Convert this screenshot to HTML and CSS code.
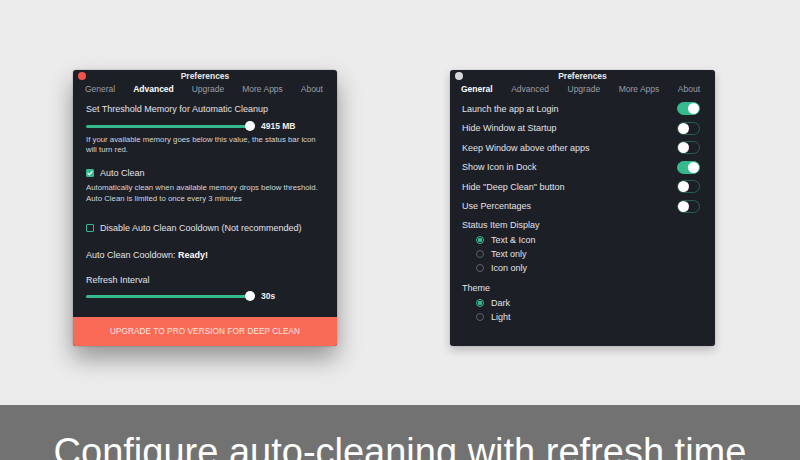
FILE: index.html
```html
<!DOCTYPE html>
<html>
<head>
<meta charset="utf-8">
<link rel="stylesheet" href="styles.css">
</head>
<body>
<div class="stage">
  <div class="window win-left">
    <div class="titlebar">
      <span class="dot dot-red"></span>
      <span class="title">Preferences</span>
      <span class="dot-spacer"></span>
    </div>
    <div class="tabs">
      <span class="tab">General</span>
      <span class="tab active">Advanced</span>
      <span class="tab">Upgrade</span>
      <span class="tab">More Apps</span>
      <span class="tab">About</span>
    </div>
    <div class="content adv">
      <div class="label l-threshold">Set Threshold Memory for Automatic Cleanup</div>
      <div class="slider-row s1">
        <div class="slider"><span class="track"></span><span class="thumb"></span></div>
        <span class="value">4915 MB</span>
      </div>
      <div class="desc d1">If your available memory goes below this value, the status bar icon<br>will turn red.</div>
      <div class="check-row c1"><span class="checkbox checked"><svg viewBox="0 0 8 8" width="8" height="8"><path d="M1.6 4.1 L3.3 5.7 L6.4 2.3" fill="none" stroke="#fff" stroke-width="1.2"/></svg></span><span>Auto Clean</span></div>
      <div class="desc d2">Automatically clean when available memory drops below threshold.<br>Auto Clean is limited to once every 3 minutes</div>
      <div class="check-row c2"><span class="checkbox"></span><span>Disable Auto Clean Cooldown (Not recommended)</span></div>
      <div class="label l-cooldown">Auto Clean Cooldown: <b>Ready!</b></div>
      <div class="label l-refresh">Refresh Interval</div>
      <div class="slider-row s2">
        <div class="slider"><span class="track"></span><span class="thumb"></span></div>
        <span class="value">30s</span>
      </div>
    </div>
    <div class="upgrade">UPGRADE TO PRO VERSION FOR DEEP CLEAN</div>
  </div>

  <div class="window win-right">
    <div class="titlebar">
      <span class="dot dot-gray"></span>
      <span class="title">Preferences</span>
      <span class="dot-spacer"></span>
    </div>
    <div class="tabs tabs-r">
      <span class="tab active">General</span>
      <span class="tab">Advanced</span>
      <span class="tab">Upgrade</span>
      <span class="tab">More Apps</span>
      <span class="tab">About</span>
    </div>
    <div class="content gen">
      <div class="toggles">
        <div class="row"><span>Launch the app at Login</span><span class="toggle on"></span></div>
        <div class="row"><span>Hide Window at Startup</span><span class="toggle"></span></div>
        <div class="row"><span>Keep Window above other apps</span><span class="toggle"></span></div>
        <div class="row"><span>Show Icon in Dock</span><span class="toggle on"></span></div>
        <div class="row"><span>Hide "Deep Clean" button</span><span class="toggle"></span></div>
        <div class="row"><span>Use Percentages</span><span class="toggle"></span></div>
      </div>
      <div class="label g-status">Status Item Display</div>
      <div class="radios r1">
        <div class="radio-row"><span class="radio sel"></span><span>Text &amp; Icon</span></div>
        <div class="radio-row"><span class="radio"></span><span>Text only</span></div>
        <div class="radio-row"><span class="radio"></span><span>Icon only</span></div>
      </div>
      <div class="label g-theme">Theme</div>
      <div class="radios r2">
        <div class="radio-row"><span class="radio sel"></span><span>Dark</span></div>
        <div class="radio-row"><span class="radio"></span><span>Light</span></div>
      </div>
    </div>
  </div>
</div>
<div class="band">Configure auto-cleaning with refresh time</div>
</body>
</html>
```

FILE: styles.css
```css
html, body {
  margin: 0;
  padding: 0;
}
body {
  width: 800px;
  height: 460px;
  overflow: hidden;
  background: #ececec;
  font-family: "Liberation Sans", Arial, sans-serif;
}
.stage {
  height: 405px;
  box-sizing: border-box;
  padding: 70px 0 0 73px;
  display: flex;
  gap: 113px;
  align-items: flex-start;
}
.window {
  width: 264px;
  height: 276px;
  background: #1c1f26;
  border-radius: 3px;
  display: flex;
  flex-direction: column;
  color: #e2e3e6;
  overflow: hidden;
}
.win-left {
  box-shadow: 0 12px 24px rgba(0,0,0,0.38), 0 0 2px rgba(0,0,0,0.3);
}
.win-right {
  width: 265px;
  box-shadow: 0 4px 10px rgba(0,0,0,0.22), 0 0 1px rgba(0,0,0,0.3);
}
.titlebar {
  height: 12px;
  display: flex;
  align-items: center;
  padding: 0 5px;
}
.dot, .dot-spacer {
  width: 8px;
  height: 8px;
  border-radius: 50%;
  flex: none;
}
.dot-red { background: #f0524c; }
.dot-gray { background: #d6d6d8; }
.title {
  flex: 1;
  text-align: center;
  font-size: 8.5px;
  font-weight: bold;
  color: #e8e9eb;
  line-height: 12px;
}
.tabs {
  height: 14px;
  display: flex;
  justify-content: space-between;
  align-items: center;
  padding: 0 14px 0 12px;
  font-size: 8.5px;
}
.tabs-r {
  padding: 0 15px 0 11px;
}
.tab {
  color: #9a9ea6;
}
.tab.active {
  color: #ffffff;
  font-weight: bold;
}
.content {
  flex: 1;
  padding: 0 13px;
  font-size: 9px;
}
.label {
  line-height: 12px;
}
.l-threshold { margin-top: 7px; }
.slider-row {
  height: 12px;
  display: flex;
  align-items: center;
}
.s1 { margin-top: 5px; }
.s2 { margin-top: 4px; }
.slider {
  position: relative;
  width: 169px;
  height: 12px;
  flex: none;
}
.track {
  position: absolute;
  left: 0;
  right: 5px;
  top: 5px;
  height: 2.5px;
  border-radius: 2px;
  background: #36b98c;
}
.thumb {
  position: absolute;
  right: 0;
  top: 1px;
  width: 10px;
  height: 10px;
  border-radius: 50%;
  background: #ffffff;
}
.value {
  margin-left: 6px;
  font-size: 8.5px;
  font-weight: bold;
  color: #f0f0f2;
}
.desc {
  font-size: 7.8px;
  line-height: 10px;
  color: #d4d5d8;
}
.d1 { margin-top: 3px; }
.d2 { margin-top: 3px; line-height: 11px; }
.check-row {
  height: 12px;
  display: flex;
  align-items: center;
  gap: 6px;
}
.c1 { margin-top: 12px; }
.c2 { margin-top: 18px; }
.checkbox {
  width: 8px;
  height: 8px;
  box-sizing: border-box;
  border: 1px solid #36b98c;
  border-radius: 1px;
  background: #1c1f26;
  flex: none;
  display: flex;
}
.checkbox svg { margin: -1px; }
.checkbox.checked {
  background: #36b98c;
}
.l-cooldown { margin-top: 15px; }
.l-cooldown b { color: #ffffff; }
.l-refresh { margin-top: 13px; }
.upgrade {
  height: 29px;
  background: #f96b56;
  color: #fde6e0;
  font-size: 8.2px;
  display: flex;
  align-items: center;
  justify-content: center;
  letter-spacing: 0.1px;
}
.gen {
  padding: 0 15px 0 12px;
}
.toggles {
  margin-top: 3px;
}
.row {
  height: 19.5px;
  display: flex;
  align-items: center;
  justify-content: space-between;
}
.toggle {
  position: relative;
  width: 23px;
  height: 13px;
  box-sizing: border-box;
  border-radius: 7px;
  border: 1px solid #2a5f4d;
  background: #1c1f26;
}
.toggle::after {
  content: "";
  position: absolute;
  left: 0px;
  top: 0px;
  width: 11px;
  height: 11px;
  border-radius: 50%;
  background: #ffffff;
}
.toggle.on {
  background: #36b98c;
  border-color: #36b98c;
}
.toggle.on::after {
  left: 10px;
}
.g-status { margin-top: 3px; }
.radios {
  padding-left: 14px;
}
.r1 { margin-top: 2px; }
.r2 { margin-top: 2px; }
.radio-row {
  height: 14px;
  display: flex;
  align-items: center;
  gap: 7px;
}
.radio {
  width: 8px;
  height: 8px;
  box-sizing: border-box;
  border-radius: 50%;
  border: 1px solid #5d6068;
  flex: none;
}
.radio.sel {
  border-color: #36b98c;
  background: radial-gradient(circle, #36b98c 0 2px, #1c1f26 2.4px);
}
.g-theme { margin-top: 7px; }
.band {
  height: 55px;
  box-sizing: border-box;
  background: #727272;
  color: #ffffff;
  font-size: 38px;
  line-height: 44px;
  padding-top: 25px;
  text-align: center;
  white-space: nowrap;
  overflow: hidden;
}
```
